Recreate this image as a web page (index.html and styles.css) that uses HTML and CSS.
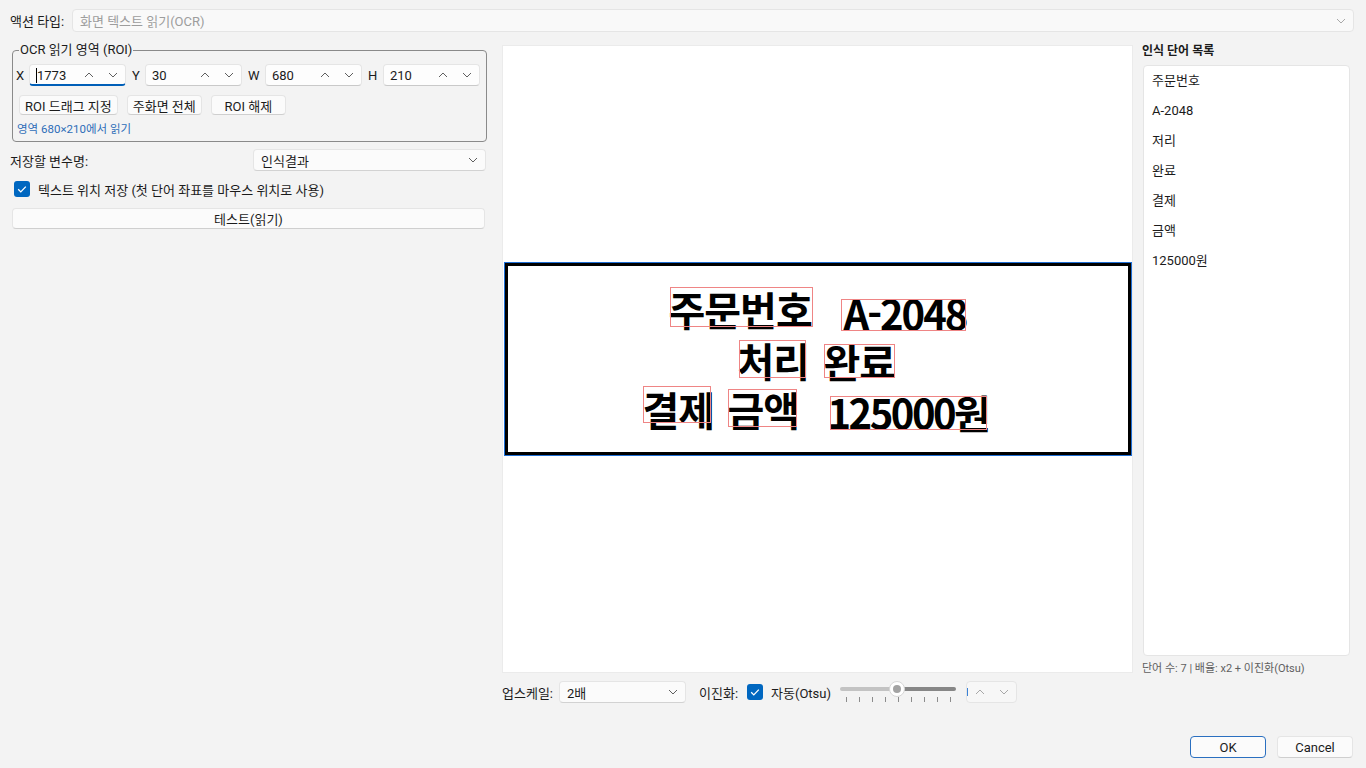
FILE: index.html
```html
<!DOCTYPE html>
<html lang="ko">
<head>
<meta charset="UTF-8">
<title>화면 텍스트 읽기(OCR)</title>
<link rel="stylesheet" href="styles.css">
</head>
<body>
<div class="dialog">

  <div class="type-row">
    <span class="type-label">액션 타입:</span>
    <div class="combo combo-disabled">
      <span>화면 텍스트 읽기(OCR)</span>
      <svg class="chev light" viewBox="0 0 10 6"><path d="M1 1l4 4 4-4"/></svg>
    </div>
  </div>

  <div class="main">
    <!-- left: settings -->
    <div class="left-col">
      <fieldset class="roi-group">
        <legend>OCR 읽기 영역 (ROI)</legend>
        <div class="spin-row">
          <span class="axis">X</span>
          <div class="spin focused">
            <span class="caret"></span><span class="spin-val">1773</span>
            <span class="spin-btn"><svg class="chev" viewBox="0 0 10 6"><path d="M1 5l4-4 4 4"/></svg></span>
            <span class="spin-btn"><svg class="chev" viewBox="0 0 10 6"><path d="M1 1l4 4 4-4"/></svg></span>
          </div>
          <span class="axis">Y</span>
          <div class="spin">
            <span class="spin-val">30</span>
            <span class="spin-btn"><svg class="chev" viewBox="0 0 10 6"><path d="M1 5l4-4 4 4"/></svg></span>
            <span class="spin-btn"><svg class="chev" viewBox="0 0 10 6"><path d="M1 1l4 4 4-4"/></svg></span>
          </div>
          <span class="axis">W</span>
          <div class="spin">
            <span class="spin-val">680</span>
            <span class="spin-btn"><svg class="chev" viewBox="0 0 10 6"><path d="M1 5l4-4 4 4"/></svg></span>
            <span class="spin-btn"><svg class="chev" viewBox="0 0 10 6"><path d="M1 1l4 4 4-4"/></svg></span>
          </div>
          <span class="axis">H</span>
          <div class="spin">
            <span class="spin-val">210</span>
            <span class="spin-btn"><svg class="chev" viewBox="0 0 10 6"><path d="M1 5l4-4 4 4"/></svg></span>
            <span class="spin-btn"><svg class="chev" viewBox="0 0 10 6"><path d="M1 1l4 4 4-4"/></svg></span>
          </div>
        </div>
        <div class="roi-buttons">
          <button class="btn">ROI 드래그 지정</button>
          <button class="btn">주화면 전체</button>
          <button class="btn">ROI 해제</button>
        </div>
        <div class="roi-note">영역 680×210에서 읽기</div>
      </fieldset>

      <div class="var-row">
        <span>저장할 변수명:</span>
        <div class="combo var-combo">
          <span>인식결과</span>
          <svg class="chev" viewBox="0 0 10 6"><path d="M1 1l4 4 4-4"/></svg>
        </div>
      </div>

      <div class="check-row">
        <span class="check"><svg viewBox="0 0 12 12"><path d="M2.2 6.3l2.6 2.6 5-5.3"/></svg></span>
        <span>텍스트 위치 저장 (첫 단어 좌표를 마우스 위치로 사용)</span>
      </div>

      <button class="btn test-btn">테스트(읽기)</button>
    </div>

    <!-- center: preview -->
    <div class="center-col">
      <div class="preview">
        <div class="ocr-image">
          <div class="ocr-canvas">
            <span class="word w1">주문번호</span>
            <span class="word w2">A-2048</span>
            <span class="word w3">처리</span>
            <span class="word w4">완료</span>
            <span class="word w5">결제</span>
            <span class="word w6">금액</span>
            <span class="word w7">125000원</span>
            <span class="hit b1"></span>
            <span class="hit b2"></span>
            <span class="hit b3"></span>
            <span class="hit b4"></span>
            <span class="hit b5"></span>
            <span class="hit b6"></span>
            <span class="hit b7"></span>
          </div>
        </div>
      </div>
      <div class="controls">
        <span class="ctl-label">업스케일:</span>
        <div class="combo scale-combo">
          <span>2배</span>
          <svg class="chev" viewBox="0 0 10 6"><path d="M1 1l4 4 4-4"/></svg>
        </div>
        <span class="ctl-label bin-label">이진화:</span>
        <span class="check"><svg viewBox="0 0 12 12"><path d="M2.2 6.3l2.6 2.6 5-5.3"/></svg></span>
        <span class="otsu">자동(Otsu)</span>
        <div class="slider">
          <div class="track"><span class="track-fill"></span><span class="track-rest"></span></div>
          <span class="thumb"></span>
          <div class="ticks">
            <i></i><i></i><i></i><i></i><i></i><i></i><i></i><i></i><i></i>
          </div>
        </div>
        <div class="spin spin-small">
          <span class="caret blue"></span>
          <span class="spin-btn"><svg class="chev light" viewBox="0 0 10 6"><path d="M1 5l4-4 4 4"/></svg></span>
          <span class="spin-btn"><svg class="chev light" viewBox="0 0 10 6"><path d="M1 1l4 4 4-4"/></svg></span>
        </div>
      </div>
    </div>

    <!-- right: recognised words -->
    <div class="right-col">
      <div class="list-title">인식 단어 목록</div>
      <ul class="word-list">
        <li>주문번호</li>
        <li>A-2048</li>
        <li>저리</li>
        <li>완료</li>
        <li>결제</li>
        <li>금액</li>
        <li>125000원</li>
      </ul>
      <div class="status">단어 수: 7 | 배율: x2 + 이진화(Otsu)</div>
    </div>
  </div>

  <div class="footer">
    <button class="btn btn-default">OK</button>
    <button class="btn">Cancel</button>
  </div>
</div>
</body>
</html>
```

FILE: styles.css
```css
* {
  box-sizing: border-box;
}
body {
  margin: 0;
  background: #f3f3f3;
  font-family: Roboto, "Noto Sans CJK KR", sans-serif;
  font-size: 13px;
  color: #1b1b1b;
  overflow: hidden;
}
.dialog {
  height: 768px;
  padding: 9px 12px 10px 10px;
  display: flex;
  flex-direction: column;
}

/* top row */
.type-row {
  display: flex;
  align-items: center;
  height: 23px;
}
.type-label {
  width: 62px;
}
.combo {
  display: flex;
  align-items: center;
  justify-content: space-between;
  height: 22px;
  padding: 0 7px 0 7px;
  background: #fbfbfb;
  border: 1px solid #e5e5e5;
  border-bottom-color: #d2d2d2;
  border-radius: 4px;
}
.combo-disabled {
  flex: 1;
  height: 23px;
  background: #f9f9f9;
  color: #9d9d9d;
  border-bottom-color: #e5e5e5;
}
.chev {
  width: 10px;
  height: 6px;
  fill: none;
  stroke: #5f5f5f;
  stroke-width: 1;
}
.chev.light {
  stroke: #a8a8a8;
}

.main {
  display: flex;
  margin-top: 10px;
}

/* left column */
.left-col {
  width: 477px;
}
.roi-group {
  width: 475px;
  margin: 0 0 0 2px;
  padding: 6px 6px 5px 3px;
  border: 1px solid #8a8a8a;
  border-radius: 4px;
  min-width: 0;
}
.roi-group legend {
  margin-left: 3px;
  padding: 0 1px;
  line-height: 16px;
}
.spin-row {
  display: grid;
  grid-template-columns: 13px 97px 19px 97px 23px 97px 21px 97px;
  align-items: center;
}
.axis {
  padding-left: 6px;
}
.axis:first-child {
  padding-left: 0;
}
.spin {
  display: flex;
  align-items: center;
  height: 22px;
  padding-left: 6px;
  background: #fdfdfd;
  border: 1px solid #e5e5e5;
  border-bottom-color: #c9c9c9;
  border-radius: 4px;
}
.spin.focused {
  border-bottom: 2px solid #005fb8;
  padding-top: 1px;
}
.spin-val {
  flex: 1;
}
.spin-btn {
  width: 24px;
  display: flex;
  justify-content: center;
}
.caret {
  width: 1px;
  height: 15px;
  background: #000;
}
.caret.blue {
  height: 8px;
  background: #3b82d6;
  margin-right: auto;
}
.roi-buttons {
  display: flex;
  gap: 9px;
  margin-top: 9px;
  padding-left: 3px;
}
.btn {
  height: 20px;
  min-width: 75px;
  padding: 0 5px;
  font: inherit;
  color: inherit;
  background: #fbfbfb;
  border: 1px solid #e5e5e5;
  border-bottom-color: #cfcfcf;
  border-radius: 4px;
}
.roi-note {
  margin: 8px 0 0 1px;
  font-size: 11.5px;
  line-height: 13px;
  color: #2d6db8;
}
.var-row {
  display: flex;
  align-items: center;
  justify-content: space-between;
  margin-top: 7px;
}
.var-combo {
  width: 233px;
  margin-right: 1px;
}
.check-row {
  display: flex;
  align-items: center;
  gap: 8px;
  height: 16px;
  margin: 10px 0 0 4px;
}
.check {
  width: 16px;
  height: 16px;
  border-radius: 3px;
  background: #0067c0;
  display: flex;
  align-items: center;
  justify-content: center;
  flex: none;
}
.check svg {
  width: 12px;
  height: 12px;
  fill: none;
  stroke: #fff;
  stroke-width: 1.3;
}
.test-btn {
  display: block;
  width: 473px;
  height: 21px;
  margin: 11px 0 0 2px;
}

/* center column */
.center-col {
  width: 631px;
  margin-left: 15px;
}
.preview {
  height: 628px;
  margin-top: 3px;
  background: #fff;
  border: 1px solid #ebebeb;
  display: flex;
  align-items: center;
  justify-content: center;
}
.ocr-image {
  width: 628px;
  height: 194px;
  border: 1px solid #1f6fd6;
}
.ocr-canvas {
  position: relative;
  height: 100%;
  border: 3px solid #000;
  background: #fff;
  overflow: hidden;
}
.word {
  position: absolute;
  font-family: "Noto Sans CJK KR", sans-serif;
  font-size: 40px;
  font-weight: 700;
  line-height: 40px;
  letter-spacing: -1px;
  color: #000;
  white-space: nowrap;
}
.w1 { left: 161px; top: 23px; }
.w2 { left: 336px; top: 27px; letter-spacing: -2px; }
.w3 { left: 230px; top: 74px; }
.w4 { left: 316px; top: 75px; }
.w5 { left: 135px; top: 123px; }
.w6 { left: 220px; top: 123px; }
.w7 { left: 320px; top: 126px; letter-spacing: -2.5px; }
.hit {
  position: absolute;
  border: 1px solid #ef8585;
}
.b1 { left: 162px; top: 21px; width: 143px; height: 40px; }
.b2 { left: 333px; top: 33px; width: 125px; height: 32px; }
.b3 { left: 231px; top: 74px; width: 67px; height: 38px; }
.b4 { left: 316px; top: 78px; width: 71px; height: 34px; }
.b5 { left: 135px; top: 120px; width: 68px; height: 37px; }
.b6 { left: 220px; top: 123px; width: 69px; height: 38px; }
.b7 { left: 322px; top: 130px; width: 157px; height: 34px; }

.controls {
  display: flex;
  align-items: center;
  height: 22px;
  margin-top: 8px;
}
.ctl-label {
  margin-right: 6px;
}
.scale-combo {
  width: 127px;
}
.bin-label {
  margin-left: 13px;
  margin-right: 9px;
}
.otsu {
  margin-left: 8px;
}
.slider {
  position: relative;
  width: 118px;
  height: 22px;
  margin-left: 8px;
}
.track {
  display: flex;
  height: 4px;
  margin: 6px 1px 0 1px;
}
.track-fill {
  width: 57px;
  background: #c3c3c3;
  border-radius: 2px 0 0 2px;
}
.track-rest {
  flex: 1;
  background: #868686;
  border-radius: 0 2px 2px 0;
}
.thumb {
  position: absolute;
  left: 50px;
  top: 0;
  width: 16px;
  height: 16px;
  border-radius: 50%;
  background: #fff;
  border: 1px solid #d6d6d6;
}
.thumb::after {
  content: "";
  position: absolute;
  left: 3px;
  top: 3px;
  width: 8px;
  height: 8px;
  border-radius: 50%;
  background: #a3a3a3;
}
.ticks {
  display: flex;
  justify-content: space-between;
  margin-top: 6px;
  padding: 0 6px 0 7px;
}
.ticks i {
  width: 1px;
  height: 5px;
  background: #8c8c8c;
}
.spin-small {
  width: 51px;
  margin-left: 9px;
  padding-left: 0;
  background: #f7f7f7;
  border-bottom-color: #e5e5e5;
}

/* right column */
.right-col {
  width: 212px;
  margin-left: 9px;
}
.list-title {
  font-size: 12px;
  font-weight: 700;
  line-height: 16px;
  padding-top: 1px;
}
.word-list {
  width: 207px;
  height: 591px;
  margin: 6px 0 0 1px;
  padding: 0 8px;
  list-style: none;
  background: #fff;
  border: 1px solid #e5e5e5;
  border-radius: 4px;
}
.word-list li {
  height: 30px;
  line-height: 30px;
}
.status {
  margin-top: 6px;
  font-size: 11px;
  line-height: 14px;
  color: #606060;
}

/* dialog buttons */
.footer {
  margin-top: auto;
  display: flex;
  justify-content: flex-end;
  gap: 11px;
  padding-right: 1px;
}
.footer .btn {
  width: 76px;
  height: 22px;
}
.btn-default {
  border-color: #2a6fc0;
}
```
